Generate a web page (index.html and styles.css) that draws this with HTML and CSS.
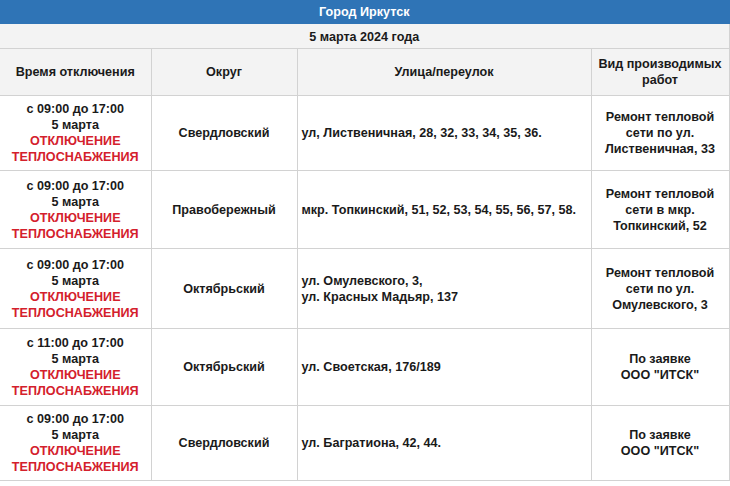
FILE: index.html
```html
<!DOCTYPE html>
<html lang="ru">
<head>
<meta charset="utf-8">
<title>Город Иркутск</title>
<link rel="stylesheet" href="styles.css">
</head>
<body>
<table class="sched">
  <colgroup>
    <col class="c1"><col class="c2"><col class="c3"><col class="c4">
  </colgroup>
  <tr class="title"><td colspan="4">Город Иркутск</td></tr>
  <tr class="date"><td colspan="4">5 марта 2024 года</td></tr>
  <tr class="head">
    <td>Время отключения</td>
    <td>Округ</td>
    <td>Улица/переулок</td>
    <td>Вид производимых работ</td>
  </tr>
  <tr class="r1">
    <td>с 09:00 до 17:00<br>5 марта<br><span class="red">ОТКЛЮЧЕНИЕ<br>ТЕПЛОСНАБЖЕНИЯ</span></td>
    <td>Свердловский</td>
    <td class="street">ул, Лиственичная, 28, 32, 33, 34, 35, 36.</td>
    <td>Ремонт тепловой<br>сети по ул.<br>Лиственичная, 33</td>
  </tr>
  <tr class="r2">
    <td>с 09:00 до 17:00<br>5 марта<br><span class="red">ОТКЛЮЧЕНИЕ<br>ТЕПЛОСНАБЖЕНИЯ</span></td>
    <td>Правобережный</td>
    <td class="street">мкр. Топкинский, 51, 52, 53, 54, 55, 56, 57, 58.</td>
    <td>Ремонт тепловой<br>сети в мкр.<br>Топкинский, 52</td>
  </tr>
  <tr class="r3">
    <td>с 09:00 до 17:00<br>5 марта<br><span class="red">ОТКЛЮЧЕНИЕ<br>ТЕПЛОСНАБЖЕНИЯ</span></td>
    <td>Октябрьский</td>
    <td class="street">ул. Омулевского, 3,<br>ул. Красных Мадьяр, 137</td>
    <td>Ремонт тепловой<br>сети по ул.<br>Омулевского, 3</td>
  </tr>
  <tr class="r4">
    <td>с 11:00 до 17:00<br>5 марта<br><span class="red">ОТКЛЮЧЕНИЕ<br>ТЕПЛОСНАБЖЕНИЯ</span></td>
    <td>Октябрьский</td>
    <td class="street">ул. Своетская, 176/189</td>
    <td>По заявке<br>ООО "ИТСК"</td>
  </tr>
  <tr class="r5">
    <td>с 09:00 до 17:00<br>5 марта<br><span class="red">ОТКЛЮЧЕНИЕ<br>ТЕПЛОСНАБЖЕНИЯ</span></td>
    <td>Свердловский</td>
    <td class="street">ул. Багратиона, 42, 44.</td>
    <td>По заявке<br>ООО "ИТСК"</td>
  </tr>
</table>
</body>
</html>
```
FILE: styles.css
```css
html, body {
  margin: 0;
  padding: 0;
  background: #ffffff;
}
body {
  font-family: "Liberation Sans", Arial, sans-serif;
  font-size: 12.6px;
  font-weight: bold;
  color: #1a1a1a;
}
.sched {
  border-collapse: collapse;
  table-layout: fixed;
  width: 729px;
}
.c1 { width: 151px; }
.c2 { width: 146px; }
.c3 { width: 294px; }
.c4 { width: 138px; }
.sched td {
  border: 1px solid #d2d2d2;
  text-align: center;
  vertical-align: middle;
  line-height: 16px;
  padding: 0 2px;
}
.sched td:first-child { border-left: none; }
.title td {
  background: #2f74b6;
  color: #ffffff;
  height: 23px;
  border-color: #2f74b6;
  border-top: none;
}
.date td {
  background: #f3f3f3;
  height: 23px;
  padding-top: 1px;
}
.head td {
  background: #f3f3f3;
  height: 46px;
}
.head td:last-child { padding: 0; }
.r1 td { height: 74px; }
.r2 td { height: 77px; }
.r3 td { height: 79px; }
.r4 td { height: 76px; }
.r5 td { height: 74px; }
.sched td.street {
  text-align: left;
  padding-left: 4px;
}
.red { color: #d4202c; }
```
